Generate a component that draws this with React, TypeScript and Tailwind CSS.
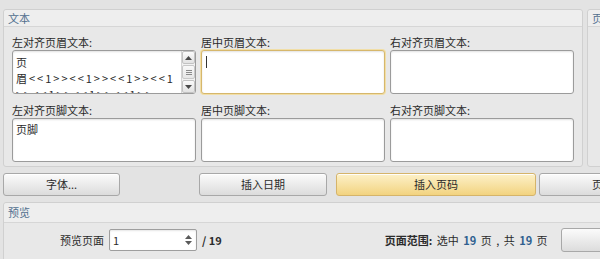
import React from "react";

const TextBox: React.FC<{ focused?: boolean; children?: React.ReactNode; className?: string }> = ({
  focused,
  children,
  className = "",
}) => (
  <div
    className={
      "relative bg-white rounded-[3px] overflow-hidden shadow-[inset_0_1px_2px_rgba(0,0,0,0.12)] " +
      (focused
        ? "border border-[#d6b76c] ring-1 ring-[#f1dea6] "
        : "border border-[#9b9b9b] ") +
      className
    }
  >
    {children}
  </div>
);

const Btn: React.FC<{ yellow?: boolean; className?: string; children?: React.ReactNode }> = ({
  yellow,
  className = "",
  children,
}) => (
  <div
    className={
      "h-[23px] shrink-0 flex items-center justify-center rounded-[3px] border bg-linear-to-b shadow-[inset_0_1px_0_rgba(255,255,255,0.9)] " +
      (yellow
        ? "border-[#d5b46a] from-[#fdf1c8] to-[#f2d37f] "
        : "border-[#a8a8a8] from-[#fbfbfb] to-[#dcdcdc] ") +
      className
    }
  >
    {children}
  </div>
);

const GroupHeader: React.FC<{ title: string; className?: string }> = ({ title, className = "" }) => (
  <div
    className={
      "bg-[#eeeeee] border-b border-[#d6d6d6] px-[4px] text-[#52708f] rounded-t-[3px] whitespace-nowrap overflow-hidden " +
      className
    }
  >
    {title}
  </div>
);

export default function App() {
  return (
    <div className="w-[600px] h-[259px] overflow-hidden bg-[#e3e3e3] font-['Microsoft_YaHei','Noto_Sans_CJK_SC',sans-serif] text-[11px] text-[#2b2b2b] pt-[9px]">
      {/* top: text group + cut off page group */}
      <div className="flex pl-[3px] gap-[4px]">
        <div className="w-[580px] h-[158px] shrink-0 flex flex-col border border-[#d0d0d0] rounded-[3px] bg-[#e8e8e8]">
          <GroupHeader title="文本" className="h-[17px] leading-[16px]" />
          <div className="px-[8px] pt-[9px]">
            <div className="grid grid-cols-[184px_184px_184px] gap-x-[5px]">
              <div className="leading-[13px] mb-[1px]">左对齐页眉文本:</div>
              <div className="leading-[13px] mb-[1px]">居中页眉文本:</div>
              <div className="leading-[13px] mb-[1px]">右对齐页眉文本:</div>

              <TextBox className="h-[44px]">
                <div className="pl-[3px] pt-[3px] pr-[16px] leading-[16px] whitespace-nowrap">
                  <div>页</div>
                  <div className="tracking-[2px]">眉&lt;&lt;1&gt;&gt;&lt;&lt;1&gt;&gt;&lt;&lt;1&gt;&gt;&lt;&lt;1</div>
                  <div className="tracking-[2px]">&gt;&gt;&lt;&lt;1&gt;&gt;&lt;&lt;1&gt;&gt;&lt;&lt;1&gt;&gt;</div>
                </div>
                {/* scrollbar */}
                <div className="absolute right-0 top-0 bottom-0 w-[14px] flex flex-col bg-[#f2f2f2] border-l border-[#d4d4d4]">
                  <div className="h-[13px] flex items-center justify-center border border-[#c2c2c2] rounded-[2px] bg-linear-to-b from-[#fbfbfb] to-[#e2e2e2]">
                    <svg width="7" height="4" viewBox="0 0 7 4">
                      <path d="M0 4 L3.5 0 L7 4 Z" fill="#4a4a4a" />
                    </svg>
                  </div>
                  <div className="flex-1 flex items-center justify-center border border-[#c8c8c8] rounded-[2px] bg-linear-to-b from-[#f9f9f9] to-[#e6e6e6] my-[1px]">
                    <div className="w-[6px] flex flex-col gap-[1px]">
                      <div className="h-px bg-[#8a8a8a]" />
                      <div className="h-px bg-[#8a8a8a]" />
                      <div className="h-px bg-[#8a8a8a]" />
                    </div>
                  </div>
                  <div className="h-[13px] flex items-center justify-center border border-[#c2c2c2] rounded-[2px] bg-linear-to-b from-[#fbfbfb] to-[#e2e2e2]">
                    <svg width="7" height="4" viewBox="0 0 7 4">
                      <path d="M0 0 L3.5 4 L7 0 Z" fill="#4a4a4a" />
                    </svg>
                  </div>
                </div>
              </TextBox>
              <TextBox focused className="h-[44px]">
                <div className="absolute left-[4px] top-[5px] w-px h-[12px] bg-[#333]" />
              </TextBox>
              <TextBox className="h-[44px]" />

              <div className="leading-[13px] mt-[10px] mb-[1px]">左对齐页脚文本:</div>
              <div className="leading-[13px] mt-[10px] mb-[1px]">居中页脚文本:</div>
              <div className="leading-[13px] mt-[10px] mb-[1px]">右对齐页脚文本:</div>

              <TextBox className="h-[44px]">
                <div className="pl-[3px] pt-[3px] leading-[14px]">页脚</div>
              </TextBox>
              <TextBox className="h-[44px]" />
              <TextBox className="h-[44px]" />
            </div>
          </div>
        </div>
        <div className="w-[40px] h-[158px] shrink-0 flex flex-col border border-[#d0d0d0] rounded-[3px] bg-[#e8e8e8]">
          <GroupHeader title="页" className="h-[17px] leading-[16px]" />
        </div>
      </div>

      {/* buttons */}
      <div className="flex mt-[6px] pl-[3px]">
        <Btn className="w-[117px]">字体...</Btn>
        <Btn className="w-[128px] ml-[79px]">插入日期</Btn>
        <Btn yellow className="w-[200px] ml-[9px]">插入页码</Btn>
        <Btn className="w-[80px] ml-[3px] justify-start pl-[52px]">页</Btn>
      </div>

      {/* preview group */}
      <div className="mt-[6px] ml-[3px] w-[620px] h-[70px] flex flex-col border border-[#d0d0d0] rounded-[3px] bg-[#e8e8e8]">
        <GroupHeader title="预览" className="h-[20px] leading-[19px]" />
        <div className="flex items-center pt-[5px] whitespace-nowrap">
          <div className="w-[100px] shrink-0 text-right leading-[22px]">预览页面</div>
          <div className="ml-[5px] w-[88px] h-[22px] shrink-0 flex items-center justify-between bg-white border border-[#9e9e9e] rounded-[2px] shadow-[inset_0_1px_2px_rgba(0,0,0,0.1)] pl-[3px] pr-[4px]">
            <span>1</span>
            <div className="flex flex-col gap-[2px]">
              <svg width="7" height="4" viewBox="0 0 7 4">
                <path d="M0 4 L3.5 0 L7 4 Z" fill="#5a5a5a" />
              </svg>
              <svg width="7" height="4" viewBox="0 0 7 4">
                <path d="M0 0 L3.5 4 L7 0 Z" fill="#5a5a5a" />
              </svg>
            </div>
          </div>
          <div className="ml-[5px] shrink-0 font-bold">/ 19</div>
          <div className="ml-[163px] shrink-0 [word-spacing:2px]">
            <span className="font-bold">页面范围:</span> 选中 <span className="font-bold text-[#2f5f8f]">19</span> 页 , 共{" "}
            <span className="font-bold text-[#2f5f8f]">19</span> 页
          </div>
          <div className="ml-[13px] w-[60px] h-[24px] shrink-0 rounded-[3px] border border-[#a8a8a8] bg-linear-to-b from-[#fbfbfb] to-[#dcdcdc]" />
        </div>
      </div>
    </div>
  );
}
